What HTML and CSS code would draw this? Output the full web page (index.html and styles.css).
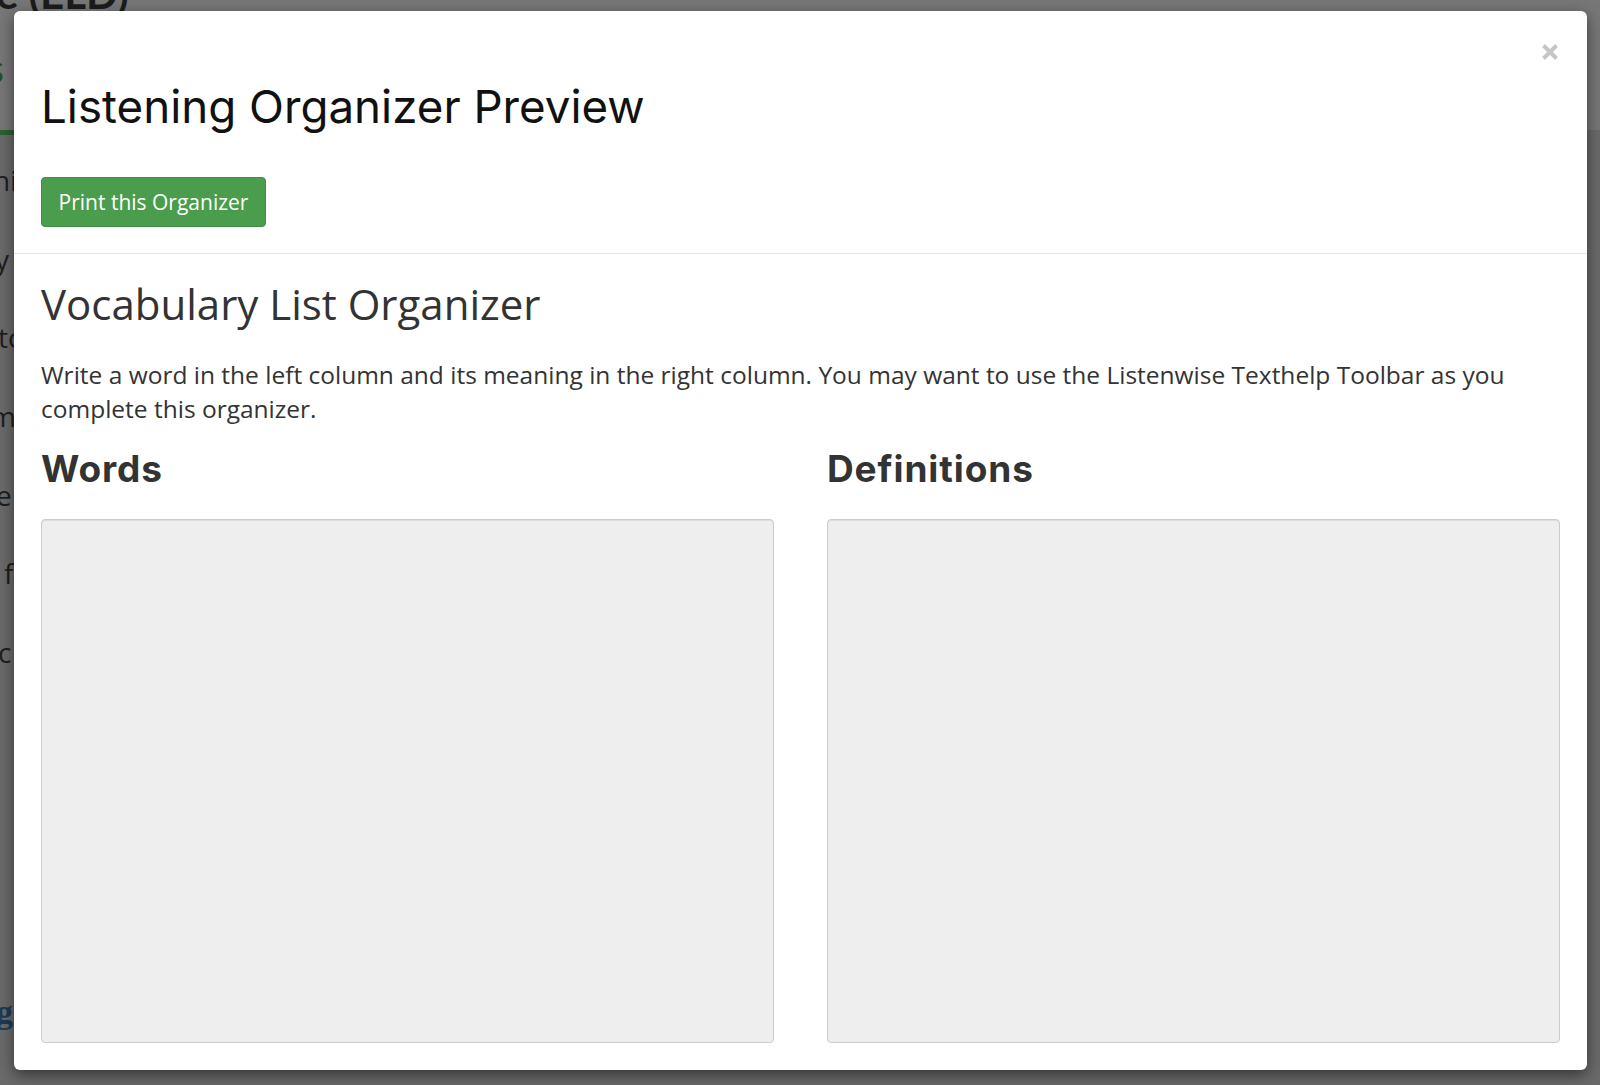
FILE: index.html
```html
<!DOCTYPE html>
<html lang="en">
<head>
<meta charset="utf-8">
<title>Listening Organizer Preview</title>
<link rel="stylesheet" href="styles.css">
</head>
<body>
<div class="page">
  <div class="page-header">
    <div class="page-title">Language Practice (ELD)</div>
    <div class="page-tabs">Lessons</div>
  </div>
  <div class="page-rule"></div>
  <div class="page-lines">
    <div class="pl pl-hi">hi</div>
    <div class="pl pl-y">y</div>
    <div class="pl pl-tc">tc</div>
    <div class="pl pl-m">m</div>
    <div class="pl pl-e">e</div>
    <div class="pl pl-f">f</div>
    <div class="pl pl-c">c</div>
  </div>
  <div class="page-link">g</div>
</div>

<div class="modal" role="dialog">
  <div class="modal-header">
    <button class="close" aria-label="Close">
      <svg width="18" height="18" viewBox="0 0 18 18"><path d="M2.5 2.5 L15.5 15.5 M15.5 2.5 L2.5 15.5" stroke="#c6c6c6" stroke-width="4" stroke-linecap="butt"/></svg>
    </button>
    <h1 class="modal-title">Listening Organizer Preview</h1>
    <button class="btn-print">Print this Organizer</button>
  </div>
  <div class="modal-body">
    <h2 class="org-title">Vocabulary List Organizer</h2>
    <p class="org-desc">Write a word in the left column and its meaning in the right column. You may want to use the Listenwise Texthelp Toolbar as you complete this organizer.</p>
    <div class="org-cols">
      <div class="org-col">
        <h3 class="col-title">Words</h3>
        <div class="col-box"></div>
      </div>
      <div class="org-col">
        <h3 class="col-title">Definitions</h3>
        <div class="col-box"></div>
      </div>
    </div>
  </div>
</div>
</body>
</html>
```

FILE: styles.css
```css
* { box-sizing: border-box; }
html, body {
  margin: 0;
  padding: 0;
  width: 1600px;
  height: 1085px;
  overflow: hidden;
}
body {
  background: #6a6a6a;
  font-family: "Open Sans", "Noto Sans", sans-serif;
  position: relative;
}

/* dimmed page behind the dialog */
.page {
  width: 100%;
  height: 100%;
  color: #1e1e1e;
}
.page-header {
  height: 130px;
  background: #777777;
  overflow: hidden;
}
.page-rule {
  width: 50%;
  height: 5px;
  background: #2c612d;
}
.page-title {
  font-family: "Lato", sans-serif;
  font-weight: 700;
  font-size: 42px;
  line-height: 40px;
  margin-top: -27px;
  margin-left: -322px;
  color: #1c1c1c;
  white-space: nowrap;
}
.page-tabs {
  font-family: "Lato", sans-serif;
  font-size: 40px;
  line-height: 40px;
  margin-top: 35px;
  margin-left: -133px;
  color: #245224;
  white-space: nowrap;
}
.page-lines {
  padding-top: 6px;
}
.pl {
  height: 78.7px;
  line-height: 78.7px;
  font-size: 28px;
  white-space: nowrap;
  color: #1e1e1e;
}
.pl-hi { margin-left: -7px; }
.pl-y { margin-left: -5px; }
.pl-tc { margin-left: -2px; }
.pl-m { margin-left: -10px; }
.pl-e { margin-left: -4px; }
.pl-f { margin-left: 4px; }
.pl-c { margin-left: -2px; }
.page-link {
  margin-top: 300px;
  margin-left: -4px;
  font-family: "Liberation Serif", serif;
  font-weight: 700;
  font-size: 34px;
  line-height: 40px;
  color: #1c3a57;
  white-space: nowrap;
}

/* dialog */
.modal {
  position: absolute;
  left: 14px;
  top: 11px;
  width: 1573px;
  height: 1059px;
  background: #ffffff;
  border-radius: 6px;
  box-shadow: 0 5px 15px rgba(0, 0, 0, 0.5);
  display: flex;
  flex-direction: column;
}
.modal-header {
  position: relative;
  padding: 70.5px 27px 26.5px;
  border-bottom: 1px solid #e5e5e5;
}
.close {
  position: absolute;
  right: 28px;
  top: 32px;
  width: 18px;
  height: 18px;
  padding: 0;
  border: 0;
  background: none;
  display: block;
}
.close svg { display: block; }
.modal-title {
  margin: 0 0 45.6px;
  font-family: "Inter", "Lato", sans-serif;
  font-weight: 400;
  font-size: 45.7px;
  line-height: 49.4px;
  color: #111111;
}
.btn-print {
  display: block;
  height: 50px;
  width: 225px;
  padding: 0;
  background: #4a9d4c;
  border: 1px solid #3f8e42;
  border-radius: 4px;
  color: #ffffff;
  font-family: "Open Sans", sans-serif;
  font-size: 21px;
  line-height: 48px;
  text-align: center;
}

.modal-body {
  flex: 1;
  padding: 27px 27px 27px;
  display: flex;
  flex-direction: column;
}
.org-title {
  margin: 0;
  font-family: "Open Sans", sans-serif;
  font-weight: 400;
  font-size: 42px;
  line-height: 46.2px;
  color: #333333;
}
.org-desc {
  margin: 30.7px 0 0;
  font-size: 24.5px;
  line-height: 34px;
  color: #333333;
}
.org-cols {
  flex: 1;
  display: grid;
  grid-template-columns: 1fr 1fr;
  column-gap: 53px;
  margin-top: 22px;
}
.org-col {
  display: flex;
  flex-direction: column;
}
.col-title {
  margin: 0 0 29.6px;
  font-family: "Inter", "Lato", sans-serif;
  font-weight: 700;
  font-size: 37px;
  line-height: 42px;
  letter-spacing: 0.9px;
  color: #333333;
}
.col-box {
  flex: 1;
  background: #eeeeee;
  border: 1px solid #cccccc;
  border-radius: 4px;
  box-shadow: inset 0 1px 1px rgba(0, 0, 0, 0.075);
}
```
